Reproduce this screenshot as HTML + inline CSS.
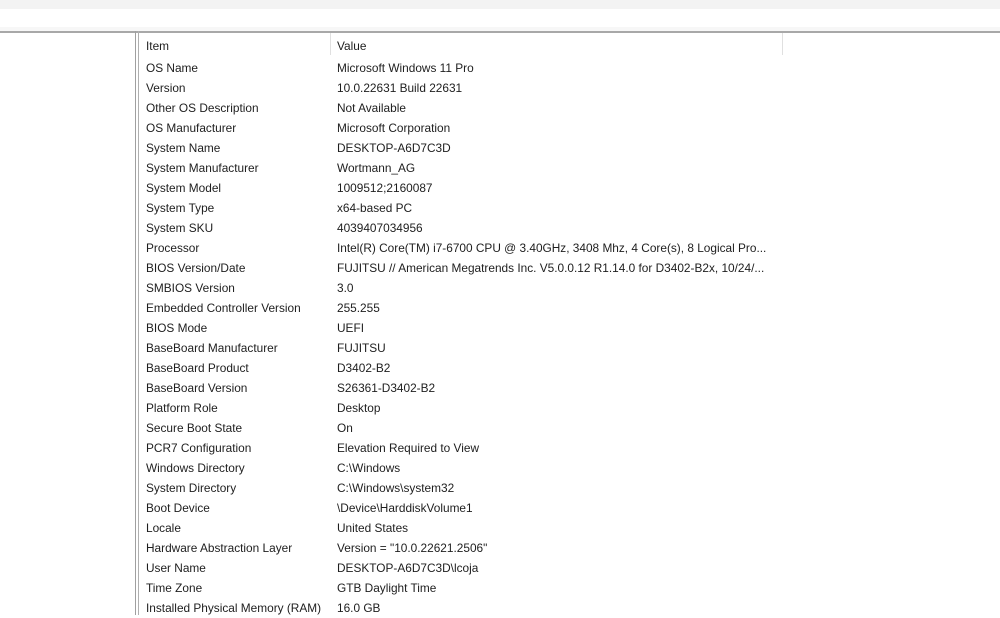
<!DOCTYPE html>
<html><head><meta charset="utf-8"><style>
html,body{margin:0;padding:0;width:1000px;height:615px;overflow:hidden;background:#fff;font-family:"Liberation Sans",sans-serif;}
.top{position:absolute;left:0;top:0;width:1000px;height:9px;background:#f3f3f3;}
.bar{position:absolute;left:0;top:27px;width:1000px;height:4px;background:#f7f7f7;}
.line{position:absolute;left:0;top:31px;width:1000px;height:2px;background:#a8a8a8;}
.lb{position:absolute;left:135px;top:31px;width:1px;height:584px;background:#a0a0a0;}
.rb{position:absolute;left:138px;top:31px;width:1px;height:584px;background:#b0b0b0;}
.cd{position:absolute;left:330px;top:33px;width:1px;height:22px;background:#e0e0e0;}
.cd2{position:absolute;left:782px;top:33px;width:1px;height:22px;background:#e0e0e0;}
.r{position:absolute;left:146px;height:20px;font-size:11.85px;color:#1e1e1e;white-space:nowrap;line-height:20px;}
.r span{position:absolute;left:191px;}
</style></head><body>
<div class="top"></div><div class="bar"></div><div class="line"></div><div class="lb"></div><div class="rb"></div><div class="cd"></div><div class="cd2"></div>
<div class="r" style="top:36px">Item<span>Value</span></div>
<div class="r" style="top:58px">OS Name<span>Microsoft Windows 11 Pro</span></div>
<div class="r" style="top:78px">Version<span>10.0.22631 Build 22631</span></div>
<div class="r" style="top:98px">Other OS Description<span>Not Available</span></div>
<div class="r" style="top:118px">OS Manufacturer<span>Microsoft Corporation</span></div>
<div class="r" style="top:138px">System Name<span>DESKTOP-A6D7C3D</span></div>
<div class="r" style="top:158px">System Manufacturer<span>Wortmann_AG</span></div>
<div class="r" style="top:178px">System Model<span>1009512;2160087</span></div>
<div class="r" style="top:198px">System Type<span>x64-based PC</span></div>
<div class="r" style="top:218px">System SKU<span>4039407034956</span></div>
<div class="r" style="top:238px">Processor<span>Intel(R) Core(TM) i7-6700 CPU @ 3.40GHz, 3408 Mhz, 4 Core(s), 8 Logical Pro...</span></div>
<div class="r" style="top:258px">BIOS Version/Date<span>FUJITSU // American Megatrends Inc. V5.0.0.12 R1.14.0 for D3402-B2x, 10/24/...</span></div>
<div class="r" style="top:278px">SMBIOS Version<span>3.0</span></div>
<div class="r" style="top:298px">Embedded Controller Version<span>255.255</span></div>
<div class="r" style="top:318px">BIOS Mode<span>UEFI</span></div>
<div class="r" style="top:338px">BaseBoard Manufacturer<span>FUJITSU</span></div>
<div class="r" style="top:358px">BaseBoard Product<span>D3402-B2</span></div>
<div class="r" style="top:378px">BaseBoard Version<span>S26361-D3402-B2</span></div>
<div class="r" style="top:398px">Platform Role<span>Desktop</span></div>
<div class="r" style="top:418px">Secure Boot State<span>On</span></div>
<div class="r" style="top:438px">PCR7 Configuration<span>Elevation Required to View</span></div>
<div class="r" style="top:458px">Windows Directory<span>C:\Windows</span></div>
<div class="r" style="top:478px">System Directory<span>C:\Windows\system32</span></div>
<div class="r" style="top:498px">Boot Device<span>\Device\HarddiskVolume1</span></div>
<div class="r" style="top:518px">Locale<span>United States</span></div>
<div class="r" style="top:538px">Hardware Abstraction Layer<span>Version = "10.0.22621.2506"</span></div>
<div class="r" style="top:558px">User Name<span>DESKTOP-A6D7C3D\lcoja</span></div>
<div class="r" style="top:578px">Time Zone<span>GTB Daylight Time</span></div>
<div class="r" style="top:598px">Installed Physical Memory (RAM)<span>16.0 GB</span></div>
</body></html>
